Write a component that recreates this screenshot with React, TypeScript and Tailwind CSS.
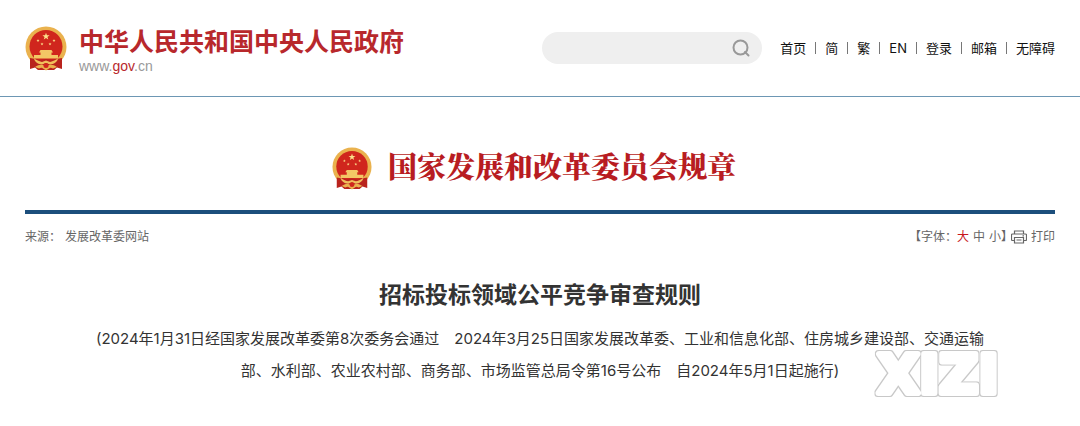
import React from 'react';

const navItems = ['首页', '简', '繁', 'EN', '登录', '邮箱', '无障碍'];

const Star: React.FC<{ x: number; y: number; r: number }> = ({ x, y, r }) => (
    <path
        transform={`translate(${x} ${y}) scale(${r})`}
        d="M0-1 .24-.32.95-.31.38.12.59.81 0 .4-.59.81-.38.12-.95-.31-.24-.32Z"
        fill="#fbe08a"
    />
);

const Emblem: React.FC<{ className: string }> = ({ className }) => (
    <svg viewBox="0 0 42 45" className={className} aria-hidden="true">
        <circle cx="21" cy="21" r="20.5" fill="#eab24e" />
        <circle cx="21" cy="20.500" r="16.5" fill="#d0261d" />
        <Star x={21} y={10.5} r={3.8} />
        <Star x={13} y={14.5} r={1.6} />
        <Star x={29} y={14.5} r={1.6} />
        <Star x={17} y={18} r={1.6} />
        <Star x={25} y={18} r={1.6} />
        <path d="M15.500 24h11l1.500 2.500H14ZM15.500 26.500h11V29h-11ZM9 29h24v3.500H9Z" fill="#f3c765" />
        <path d="M5 32c4 1 7 1 10 2 2 0 4-1 6-1s4 1 6 1c3-1 6-1 10-2v11l-5-1.500-3 2.500H13l-3-2.500L5 43Z" fill="#b9231d" />
        <path d="M9 32.500c3 2 6 3 8 3.500l4-1.500 4 1.500c2-.5 5-1.500 8-3.500-1 4-4 5.500-8 6l-4-1.500-4 1.500c-4-.5-7-2-8-6Z" fill="#f0bf5c" />
        <path d="M10 41c3-2 5-2.500 8-2l3 1 3-1c3-.5 5 0 8 2l-4 1.500c-2-1-3-1-4 0l-3 2-3-2c-1-1-2-1-4 0Z" fill="#eab24e" />
        <circle cx="21" cy="39.500" r="2.500" fill="#d0261d" />
    </svg>
);

const PrintIcon = () => (
    <svg viewBox="0 0 16 14" className="h-3.5 w-4" fill="none" stroke="currentColor" aria-hidden="true">
        <path
            strokeWidth="1.2"
            d="M3.500 4V1h9v3M3.500 10.500h-2a1 1 0 0 1-1-1V5a1 1 0 0 1 1-1h13a1 1 0 0 1 1 1v4.500a1 1 0 0 1-1 1h-2M3.500 7.500h9V13h-9ZM5.500 10h5M11.500 5.800h1.500"
        />
    </svg>
);

const Header = () => (
    <header className="flex h-[97px] items-center justify-between border-b border-[#6d97b4] px-[25px]">
        <a href="#home" className="flex items-center gap-3">
            <Emblem className="h-[45px] w-[42px]" />
            <div className="pt-1">
                <div className="text-[25px] leading-8 font-bold text-[#b8282c]">中华人民共和国中央人民政府</div>
                <div className="font-['Liberation_Sans'] text-sm leading-4 text-[#999]">
                    www.<span className="text-[#b8282c]">gov</span>.cn
                </div>
            </div>
        </a>
        <div className="flex items-center gap-[18px]">
            <form className="flex h-8 w-[220px] items-center rounded-full bg-[#efefef] pr-3 pl-4">
                <input type="text" aria-label="搜索" className="min-w-0 flex-1 bg-transparent text-sm outline-none" />
                <button type="button" aria-label="搜索" className="text-[#999]">
                    <svg viewBox="0 0 18 18" className="size-[18px]" fill="none" stroke="currentColor" strokeWidth="2">
                        <circle cx="8.500" cy="8.500" r="7" />
                        <path d="m13 13 3.500 3.500" strokeLinecap="round" />
                    </svg>
                </button>
            </form>
            <nav className="flex items-center text-[13px] leading-5 text-[#111]">
                {navItems.map((item, i) => (
                    <React.Fragment key={item}>
                        {i > 0 && <span className="mx-[9px] h-3 w-px bg-[#777]" />}
                        <a href="#nav">{item}</a>
                    </React.Fragment>
                ))}
            </nav>
        </div>
    </header>
);

const Watermark = () => (
    <svg viewBox="0 0 132 50" className="absolute right-[51px] bottom-0 h-[50px] w-[132px]">
        <defs>
            <filter id="outline" x="-10%" y="-20%" width="120%" height="140%">
                <feMorphology in="SourceAlpha" operator="dilate" radius="1" result="grow" />
                <feFlood floodColor="#c8c8c8" />
                <feComposite in2="grow" operator="in" />
                <feMerge>
                    <feMergeNode />
                    <feMergeNode in="SourceGraphic" />
                </feMerge>
            </filter>
        </defs>
        <text
            x="66"
            y="44"
            textAnchor="middle"
            filter="url(#outline)"
            className="fill-white stroke-white font-['DejaVu_Sans'] text-[54px] font-bold"
            strokeWidth="6"
            strokeLinejoin="round"
        >
            XIZI
        </text>
    </svg>
);

export default function App() {
    return (
        <div className="bg-white font-['Inter','Noto_Sans_CJK_SC',sans-serif] text-[#333]">
            <Header />
            <main className="px-[25px] pt-[50px] pb-7">
                <div className="flex items-start justify-center gap-4 pr-3 pb-5">
                    <Emblem className="h-[43px] w-10" />
                    <h2 className="font-['Noto_Serif_CJK_SC','Noto_Sans_CJK_SC',serif] text-[29px] leading-[38px] font-black text-[#b81c22]">
                        国家发展和改革委员会规章
                    </h2>
                </div>
                <div className="flex justify-between border-t-4 border-[#1c4f7c] pt-[13px] text-xs leading-5 text-[#666]">
                    <div className="flex gap-1">
                        <span>来源：</span>
                        <span>发展改革委网站</span>
                    </div>
                    <div className="flex items-center gap-1">
                        <div className="flex items-center">
                            <span>【字体：</span>
                            <div className="flex gap-1">
                                <button type="button" className="text-[#c8161d]">大</button>
                                <button type="button">中</button>
                                <button type="button">小</button>
                            </div>
                            <span className="[font-feature-settings:'halt']">】</span>
                        </div>
                        <button type="button" className="flex items-center gap-1">
                            <PrintIcon />
                            打印
                        </button>
                    </div>
                </div>
                <div className="relative pt-8 pb-3">
                    <h1 className="text-center text-[23px] leading-8 font-bold">招标投标领域公平竞争审查规则</h1>
                    <Watermark />
                    <p className="relative px-16 pt-3 text-center text-[15px] leading-8">
                        (2024年1月31日经国家发展改革委第8次委务会通过　2024年3月25日国家发展改革委、工业和信息化部、住房城乡建设部、交通运输部、水利部、农业农村部、商务部、市场监管总局令第16号公布　自2024年5月1日起施行)
                    </p>
                </div>
            </main>
        </div>
    );
}
